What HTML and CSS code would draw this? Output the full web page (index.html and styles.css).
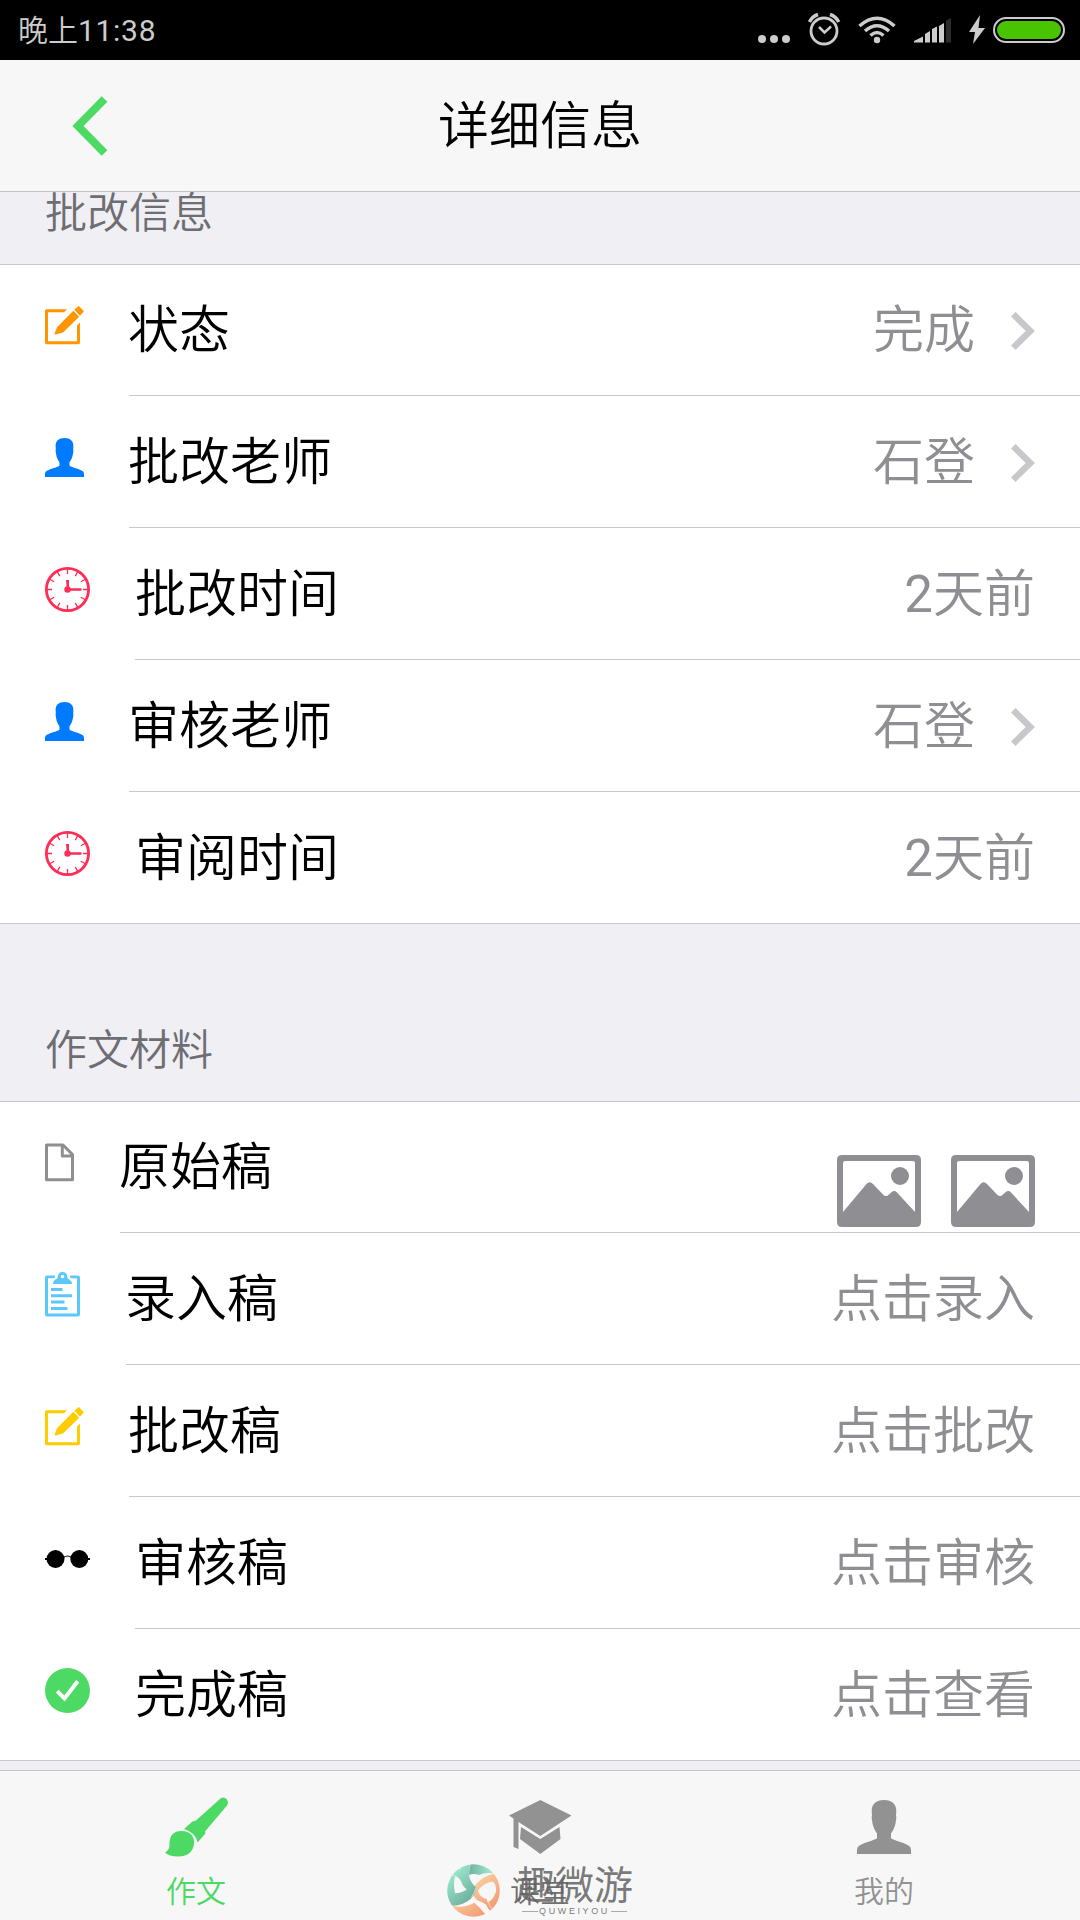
FILE: index.html
```html
<!DOCTYPE html>
<html lang="zh-CN">
<head>
<meta charset="utf-8">
<title>详细信息</title>
<link rel="stylesheet" href="styles.css">
</head>
<body>
<svg class="defs" aria-hidden="true">
  <symbol id="compose" viewBox="0 0 39 39">
    <path d="M22 3.300H1.500Q0 3.300 0 4.800V36.500Q0 38.300 1.500 38.300H33.500Q35 38.300 35 36.500V16.500L32 19.500V35.300H3V6.300H19Z"/>
    <path d="M28.300 4.800L34.200 10.700L18 26.500L10.500 28.500Q9.300 28.600 9.700 27.200L12 21.300ZM29.300 3.800L33.500 0Q34 0 38.500 4.800Q38.800 5.500 38.300 6L35 9.700Z"/>
  </symbol>
  <symbol id="person" viewBox="0 0 54 54">
    <path d="M27 0C35 0 39.500 4.500 39.300 11L39 15.500Q39.800 17 39 20C38.500 24 37.500 29 34 33.500V38.300C38 41 47 42.500 51.500 45.500Q54 47 54 49.500V54H0V49.500Q0 47 2.500 45.500C7 42.500 16 41 20 38.300V33.500C16.500 29 15.500 24 15 20Q14.200 17 15 15.500L14.700 11C14.500 4.500 19 0 27 0Z"/>
  </symbol>
  <symbol id="clock" viewBox="0 0 45 45">
    <circle cx="22.500" cy="22.500" r="21.100" fill="none" stroke="currentColor" stroke-width="2.800"/>
    <path fill="none" stroke="currentColor" stroke-width="1.300" d="M22.500 2V7M22.500 38V43M2 22.500H7M38 22.500H43M12.200 4.700L14.800 9.200M32.800 4.700L30.200 9.200M12.200 40.300L14.800 35.800M32.800 40.300L30.200 35.800M4.700 12.200L9.200 14.800M4.700 32.800L9.200 30.200M40.300 12.200L35.800 14.800M40.300 32.800L35.800 30.200"/>
    <circle cx="22.500" cy="22.500" r="3.200"/>
    <path d="M21 13H24V21.200H36.500V23.800H22Z"/>
  </symbol>
  <symbol id="doc" viewBox="0 0 30 39">
    <path fill="none" stroke="currentColor" stroke-width="3" stroke-linejoin="round" d="M1.500 2H18L27.500 11.500V36.700H1.500ZM17.300 2V13H27.400"/>
  </symbol>
  <symbol id="clipboard" viewBox="0 0 36 45">
    <path d="M10 3.500H2Q0 3.500 0 5.500V42.500Q0 44.500 2 44.500H33Q35 44.500 35 42.500V5.500Q35 3.500 33 3.500H25V5.500L27 6.300H32V41.500H3V6.300H8L10 5.500Z"/>
    <path fill-rule="evenodd" d="M17.500 0Q22 0 22.300 5C22.500 8 27 7 27 12H8C8 7 12.500 8 12.700 5Q13 0 17.500 0ZM17.500 2.800A1.800 1.800 0 1 0 17.500 6.400A1.800 1.800 0 1 0 17.500 2.800Z"/>
    <path d="M6 16H17.500V19H6ZM6 22.300H27V25.300H6ZM6 28.500H19.500V31.500H6ZM6 35H22.500V38H6Z"/>
  </symbol>
  <symbol id="glasses" viewBox="0 0 45 18">
    <circle cx="10.500" cy="9" r="9"/><circle cx="34.300" cy="9" r="9"/>
    <path fill="none" stroke="currentColor" stroke-width="1.200" d="M18.500 7.500Q22.500 4.500 26.500 7.500"/>
    <path d="M0 8H3V10H0ZM42 8H45V10H42Z"/>
  </symbol>
  <symbol id="check" viewBox="0 0 45 45">
    <circle cx="22.500" cy="22.500" r="22.500"/>
    <path fill="none" stroke="#fff" stroke-width="4" d="M12.200 23.200L19.500 30.500L32.700 13.200"/>
  </symbol>
  <symbol id="image" viewBox="0 0 84 72">
    <path fill-rule="evenodd" d="M5 0H79Q84 0 84 5V67Q84 72 79 72H5Q0 72 0 67V5Q0 0 5 0ZM8 6Q6 6 6 8V57L29.500 29Q32.500 25.500 36 29L46 39.500Q49 42.500 52 39.500L54.500 37.300Q57.300 34.800 60 37.500L78 57V8Q78 6 76 6Z"/>
    <circle cx="63" cy="21" r="9"/>
  </symbol>
  <symbol id="chevron" viewBox="0 0 24 38">
    <path fill="none" stroke="currentColor" stroke-width="6.500" d="M2.300 2.300L19.300 19L2.300 35.700"/>
  </symbol>
</svg>

<header class="status">
  <span class="time">晚上<span class="num">11:38</span></span>
  <svg class="status-icons" viewBox="0 0 324 60">
    <g fill="#ccc">
      <circle cx="17" cy="39" r="4"/><circle cx="29" cy="39" r="4"/><circle cx="41" cy="39" r="4"/>
      <circle cx="132" cy="40" r="3.200"/>
      <path d="M169 42.500V41L178 36.500V42.500ZM180 42.500V34L185 31V42.500ZM187 42.500V29L192 26.500V42.500ZM194 42.500V26L199 23V42.500Z"/>
      <path fill="#2c2c2c" d="M201 42.500V20.500L206 18V42.500Z"/>
      <path d="M235 15L224 32H230L228 44L240 28H233.500Z"/>
    </g>
    <g fill="none" stroke="#ccc" stroke-width="2.800">
      <circle cx="79" cy="31" r="13"/><path d="M74 27L79.500 32.500L86 26.500" stroke-width="2.500"/>
      <path d="M64.500 22Q67 16.500 73 14.500M85 14.500Q91 16.500 93.800 22" stroke-width="3.500"/>
      <path d="M114.500 26Q132 10.500 149.500 26M120 31Q132 20.500 144 31M125.500 35.500Q132 29.500 138.500 35.500" stroke-width="3.500"/>
      <rect x="249" y="18" width="70" height="24" rx="12" stroke-width="2"/>
    </g>
    <rect x="252" y="21" width="64" height="18" rx="9" fill="#48c500"/>
  </svg>
</header>

<nav class="navbar">
  <svg class="back" viewBox="0 0 36 60"><path fill="none" stroke="currentColor" stroke-width="8" d="M32.500 3L6 30L32.500 57"/></svg>
  <h1>详细信息</h1>
</nav>

<main class="page">
  <h2 class="group-title first">批改信息</h2>
  <ul class="list">
    <li class="row"><svg class="icon s39 orange"><use href="#compose"/></svg><div class="inner"><span class="label">状态</span><span class="value">完成</span><svg class="arrow"><use href="#chevron"/></svg></div></li>
    <li class="row"><svg class="icon s39 blue"><use href="#person"/></svg><div class="inner"><span class="label">批改老师</span><span class="value">石登</span><svg class="arrow"><use href="#chevron"/></svg></div></li>
    <li class="row"><svg class="icon s45 pink"><use href="#clock"/></svg><div class="inner"><span class="label">批改时间</span><span class="value"><span class="num">2</span>天前</span></div></li>
    <li class="row"><svg class="icon s39 blue"><use href="#person"/></svg><div class="inner"><span class="label">审核老师</span><span class="value">石登</span><svg class="arrow"><use href="#chevron"/></svg></div></li>
    <li class="row"><svg class="icon s45 pink"><use href="#clock"/></svg><div class="inner"><span class="label">审阅时间</span><span class="value"><span class="num">2</span>天前</span></div></li>
  </ul>
  <h2 class="group-title">作文材料</h2>
  <ul class="list">
    <li class="row"><svg class="icon doc gray"><use href="#doc"/></svg><div class="inner"><span class="label">原始稿</span><span class="thumbs"><svg class="thumb"><use href="#image"/></svg><svg class="thumb"><use href="#image"/></svg></span></div></li>
    <li class="row"><svg class="icon clip sky"><use href="#clipboard"/></svg><div class="inner"><span class="label">录入稿</span><span class="value">点击录入</span></div></li>
    <li class="row"><svg class="icon s39 yellow"><use href="#compose"/></svg><div class="inner"><span class="label">批改稿</span><span class="value">点击批改</span></div></li>
    <li class="row"><svg class="icon glasses"><use href="#glasses"/></svg><div class="inner"><span class="label">审核稿</span><span class="value">点击审核</span></div></li>
    <li class="row"><svg class="icon s45 green"><use href="#check"/></svg><div class="inner"><span class="label">完成稿</span><span class="value">点击查看</span></div></li>
  </ul>
</main>

<footer class="tabbar">
  <a class="tab active">
    <svg class="tab-icon" viewBox="0 0 63 60"><path d="M56 1Q59 -.5 61.500 2Q64 5 62 8.500L40 34.500L40.500 36.500L32.500 45.500Q31.500 36 19 32L27.500 24.500L31 23.500ZM16.500 34C26 34 29.500 40 29 46.500C28.500 55 22 59.500 13 59.500Q4 59.500 0 55.500Q4 53 4.500 49C4 39 8 34 16.500 34Z"/></svg>
    <span>作文</span>
  </a>
  <a class="tab">
    <svg class="tab-icon" viewBox="0 0 63 60"><path d="M31.300 3L62.500 18.500L31.300 39L9.500 25V52L4.500 50V21.500L0 18.500ZM12 30L31.300 42L50.500 30L51.500 42L31.300 57L11 42Z"/></svg>
    <span class="covered">课堂</span>
  </a>
  <a class="tab">
    <svg class="tab-icon person"><use href="#person"/></svg>
    <span>我的</span>
  </a>
  <div class="watermark">
    <svg class="mark" viewBox="24 27 160 160">
      <defs>
        <linearGradient id="mint" gradientUnits="userSpaceOnUse" x1="40" y1="40" x2="120" y2="120"><stop offset="0" stop-color="#9fecd3"/><stop offset="1" stop-color="#6cab98"/></linearGradient>
        <linearGradient id="mint-top" gradientUnits="userSpaceOnUse" x1="95" y1="0" x2="160" y2="0"><stop offset="0" stop-color="#76b5a2"/><stop offset="1" stop-color="#9fecd3"/></linearGradient>
        <linearGradient id="peach" gradientUnits="userSpaceOnUse" x1="90" y1="80" x2="170" y2="180"><stop offset="0" stop-color="#fad3a2"/><stop offset="1" stop-color="#f2906c"/></linearGradient>
        <clipPath id="disc"><circle cx="104" cy="107" r="79.500"/></clipPath>
      </defs>
      <g clip-path="url(#disc)">
        <path fill="url(#peach)" d="M40 153Q75 162 106 144L122 158Q134 172 150 190L80 195L40 170Z"/>
        <path fill="url(#peach)" d="M100 104Q125 62 170 56L190 90V130L168 175Q150 170 142 150Q134 142 118 138Q100 126 100 104ZM118 106Q122 128 144 133L146 142Q162 139 172 110Q174 90 162 80Q136 84 118 106Z" fill-rule="evenodd"/>
        <path fill="url(#mint)" d="M22 100L40 55L62 40Q60 58 48 67Q42 85 48 115Q72 116 94 96L112 98Q112 124 82 142Q62 154 34 153L20 120Z"/>
        <path fill="url(#mint)" d="M48 64L68 35L100 24Q88 40 90 60Q94 82 112 98L94 112Q72 98 66 80Q60 66 48 64Z"/>
        <path fill="url(#mint-top)" d="M98 24H140L164 56Q142 51 120 60Q104 54 90 60Q90 42 98 24Z"/>
        <path fill="none" stroke="#f7f7f7" stroke-width="2" d="M40 60Q62 68 68 84M98 126Q106 118 112 98M40 152Q30 156 26 160M148 138Q150 154 168 172"/>
      </g>
    </svg>
    <div class="words"><b>趣微游</b><small>QUWEIYOU</small></div>
  </div>
</footer>
</body>
</html>
```
FILE: styles.css
```css
* { box-sizing: border-box; }
body {
  margin: 0;
  width: 1080px;
  height: 1920px;
  display: flex;
  flex-direction: column;
  overflow: hidden;
  background: #efeff4;
  color: #000;
  font-family: Roboto, "Noto Sans CJK SC", sans-serif;
  font-weight: 350;
}
h1, h2, ul { margin: 0; padding: 0; font-weight: inherit; list-style: none; }
svg { display: block; flex: none; fill: currentColor; }
.defs { display: none; }
.num { font-weight: 400; }

.status {
  flex: none;
  height: 60px;
  background: #000;
  color: #ccc;
  display: flex;
  justify-content: space-between;
  align-items: center;
}
.time { padding: 2px 0 0 18px; font-size: 30px; line-height: 58px; }
.time .num { letter-spacing: .7px; }
.status-icons { width: 324px; height: 60px; margin-right: 11px; }

.navbar {
  flex: none;
  height: 132px;
  background: #f7f7f8;
  border-bottom: 1px solid #c4c4c4;
  display: grid;
  grid-template-columns: 1fr auto 1fr;
  align-items: center;
}
.back { width: 36px; height: 60px; margin-left: 72px; color: #4cd964; }
.navbar h1 { padding-top: 2px; font-size: 51px; line-height: 129px; }

.page { flex: none; height: 1578px; }
.group-title {
  height: 177px;
  padding: 87px 45px 0;
  font-size: 42px;
  line-height: 80px;
  color: #6d6d72;
}
.group-title.first { height: 72px; padding-top: 1px; line-height: 42px; }
.list { background: #fff; border-bottom: 1px solid #c8c7cc; box-shadow: inset 0 1px #c8c7cc; }
.row { display: flex; padding-left: 45px; height: 132px; align-items: center; }
.row:last-child { height: 131px; }
.inner {
  flex: 1;
  height: 100%;
  margin-left: 45px;
  padding: 2px 45px 0 0;
  display: flex;
  align-items: center;
  border-bottom: 1px solid #c8c7cc;
}
.row:last-child .inner { border-bottom: 0; }
.label, .value { font-size: 51px; line-height: 72px; }
.label { flex: 1; margin-left: -1px; }
.s45 + .inner .label, .glasses + .inner .label { margin-left: 0; }
.value { color: #8e8e93; }
.arrow { width: 24px; height: 38px; margin-left: 36px; color: #c7c7cc; }
.icon { margin-bottom: 9px; }
.s39 { width: 39px; height: 39px; }
.s45 { width: 45px; height: 45px; }
.row:last-child .s45 { margin-bottom: 8px; }
.doc { width: 30px; height: 39px; }
.clip { width: 36px; height: 45px; }
.glasses { width: 45px; height: 18px; margin-bottom: 8px; }
.orange { color: #ff9500; }
.blue { color: #007aff; }
.pink { color: #ff2d55; }
.gray { color: #8e8e93; }
.sky { color: #5ac8fa; }
.yellow { color: #ffcc00; }
.green { color: #4cd964; }
.thumbs { display: flex; gap: 30px; padding-top: 47px; color: #8e8e93; }
.thumb { width: 84px; height: 72px; }

.tabbar {
  position: relative;
  flex: none;
  height: 150px;
  padding: 0 24px;
  background: #f7f7f8;
  border-top: 1px solid #c4c4c4;
  display: flex;
}
.tab {
  flex: 1;
  display: flex;
  flex-direction: column;
  align-items: center;
  padding-top: 26px;
  color: #929292;
  font-size: 30px;
  line-height: 44px;
}
.tab.active { color: #4cd964; }
.tab-icon { width: 63px; height: 60px; margin-bottom: 13px; }
.tab-icon.person { width: 54px; height: 54px; margin: 3px 0 16px; }
.covered { color: #707070; }

.watermark {
  position: absolute;
  left: 447px;
  top: 93px;
  display: flex;
  gap: 16px;
}
.mark { width: 53px; height: 53px; }
.words { display: flex; flex-direction: column; align-items: center; padding-top: 3px; color: rgba(100, 100, 100, .85); }
.words b { font-size: 39px; line-height: 39px; font-weight: 400; }
.words small {
  display: flex;
  align-items: center;
  gap: 1px;
  font: 9px/10px "Liberation Sans", sans-serif;
  letter-spacing: 2.6px;
}
.words small::before, .words small::after { content: ""; width: 16px; height: 1px; background: #aaa; }
```
